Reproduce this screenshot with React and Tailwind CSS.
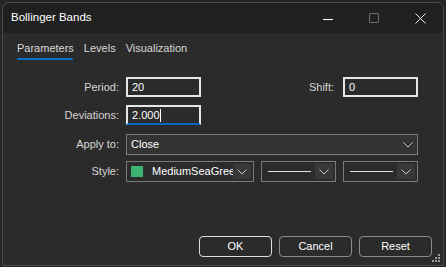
import React from 'react';

const font = { fontFamily: '"Liberation Sans", Arial, sans-serif' };

const Chevron = () => (
  <svg width="10" height="6" viewBox="0 0 10 6" className="text-[#c8c8c8]">
    <path d="M0.5 0.5 L5 5 L9.5 0.5" fill="none" stroke="currentColor" strokeWidth="1" />
  </svg>
);

const LineCombo = () => (
  <div className="flex w-[75px] h-[21px] border border-[#7a7a7a] bg-[#2b2b2b] p-[2px]">
    <div className="flex-1 flex items-center pl-[4px] pr-[4px]">
      <div className="w-full h-px bg-[#e0e0e0]"></div>
    </div>
    <div className="w-[18px] bg-[#383838] flex items-center justify-center">
      <Chevron />
    </div>
  </div>
);

export default function App() {
  return (
    <div className="w-[446px] h-[267px] bg-[#262626] p-[2px] pb-[1px]" style={font}>
      <div className="w-full h-full rounded-t-[7px] border border-[#4b4b4b] bg-[#2b2b2b] flex flex-col overflow-hidden text-[11px] relative">
        {/* title bar */}
        <div className="h-[30px] bg-[#202020] flex items-center pl-[8px] shrink-0">
          <span className="text-white text-[11.5px] flex-1">Bollinger Bands</span>
          <div className="flex items-center h-full">
            <div className="w-[46px] flex justify-center">
              <div className="w-[10px] h-px bg-white mt-[3px]"></div>
            </div>
            <div className="w-[46px] flex justify-center">
              <div className="w-[10px] h-[10px] border border-[#6e6e6e] rounded-[1px]"></div>
            </div>
            <div className="w-[46px] flex justify-center">
              <svg width="11" height="11" viewBox="0 0 11 11">
                <path d="M0.5 0.5 L10.5 10.5 M10.5 0.5 L0.5 10.5" stroke="#f0f0f0" strokeWidth="1" />
              </svg>
            </div>
          </div>
        </div>

        {/* tabs */}
        <div className="flex pl-[14px] pt-[7px] gap-[10px] text-[#d8d8d8]">
          <div className="flex flex-col items-center">
            <span className="leading-[17px]">Parameters</span>
            <div className="w-[56px] h-[2px] bg-[#0a6ed1] mt-[1px] rounded-full"></div>
          </div>
          <span className="leading-[17px]">Levels</span>
          <span className="leading-[17px]">Visualization</span>
        </div>

        {/* form */}
        <div className="flex flex-col pt-[17px] gap-[8px] text-[#d6d6d6]">
          <div className="flex items-center h-[20px]">
            <span className="w-[116px] text-right">Period:</span>
            <div className="ml-[7px] w-[75px] h-[20px] border-2 border-[#e6e6e6] bg-[#2b2b2b] text-white pl-[4px] flex items-center">20</div>
            <span className="w-[133px] text-right">Shift:</span>
            <div className="ml-[9px] w-[75px] h-[20px] border-2 border-[#e6e6e6] bg-[#2b2b2b] text-white pl-[4px] flex items-center">0</div>
          </div>
          <div className="flex items-center h-[20px]">
            <span className="w-[116px] text-right">Deviations:</span>
            <div className="ml-[7px] w-[75px] h-[20px] border-2 border-[#e6e6e6] border-b-[#0a64c0] bg-[#2b2b2b] text-white pl-[4px] flex items-center">
              2.000<span className="w-px h-[13px] bg-white"></span>
            </div>
          </div>
          <div className="flex items-center h-[21px] mt-[1px]">
            <span className="w-[116px] text-right">Apply to:</span>
            <div className="ml-[7px] w-[292px] h-[21px] border border-[#7a7a7a] bg-[#333333] text-white pl-[4px] pr-[4px] flex items-center justify-between">
              <span>Close</span>
              <Chevron />
            </div>
          </div>
          <div className="flex items-center h-[21px] -mt-[2px]">
            <span className="w-[116px] text-right">Style:</span>
            <div className="ml-[7px] w-[128px] h-[21px] border border-[#7a7a7a] bg-[#2b2b2b] p-[2px] flex">
              <div className="flex-1 flex items-center overflow-hidden whitespace-nowrap">
                <div className="w-[12px] h-[11px] bg-[#3cb371] ml-[2px] mr-[9px] shrink-0"></div>
                <span className="text-white">MediumSeaGreen</span>
              </div>
              <div className="w-[18px] bg-[#383838] flex items-center justify-center shrink-0">
                <Chevron />
              </div>
            </div>
            <div className="ml-[7px]"><LineCombo /></div>
            <div className="ml-[7px]"><LineCombo /></div>
          </div>
        </div>

        {/* buttons */}
        <div className="flex justify-end gap-[7px] mt-auto mb-[8px] pr-[11px] text-white">
          <div className="w-[73px] h-[21px] rounded-[4px] border border-[#dcdcdc] flex items-center justify-center">OK</div>
          <div className="w-[73px] h-[21px] rounded-[4px] border border-[#8a8a8a] flex items-center justify-center">Cancel</div>
          <div className="w-[73px] h-[21px] rounded-[4px] border border-[#8a8a8a] flex items-center justify-center">Reset</div>
        </div>

        {/* resize grip */}
        <svg width="9" height="9" viewBox="0 0 9 9" className="absolute right-[2px] bottom-[2px]">
          <rect x="6" y="0" width="2" height="2" fill="#9a9a9a" />
          <rect x="3" y="3" width="2" height="2" fill="#9a9a9a" />
          <rect x="6" y="3" width="2" height="2" fill="#9a9a9a" />
          <rect x="0" y="6" width="2" height="2" fill="#9a9a9a" />
          <rect x="3" y="6" width="2" height="2" fill="#9a9a9a" />
          <rect x="6" y="6" width="2" height="2" fill="#9a9a9a" />
        </svg>
      </div>
    </div>
  );
}
